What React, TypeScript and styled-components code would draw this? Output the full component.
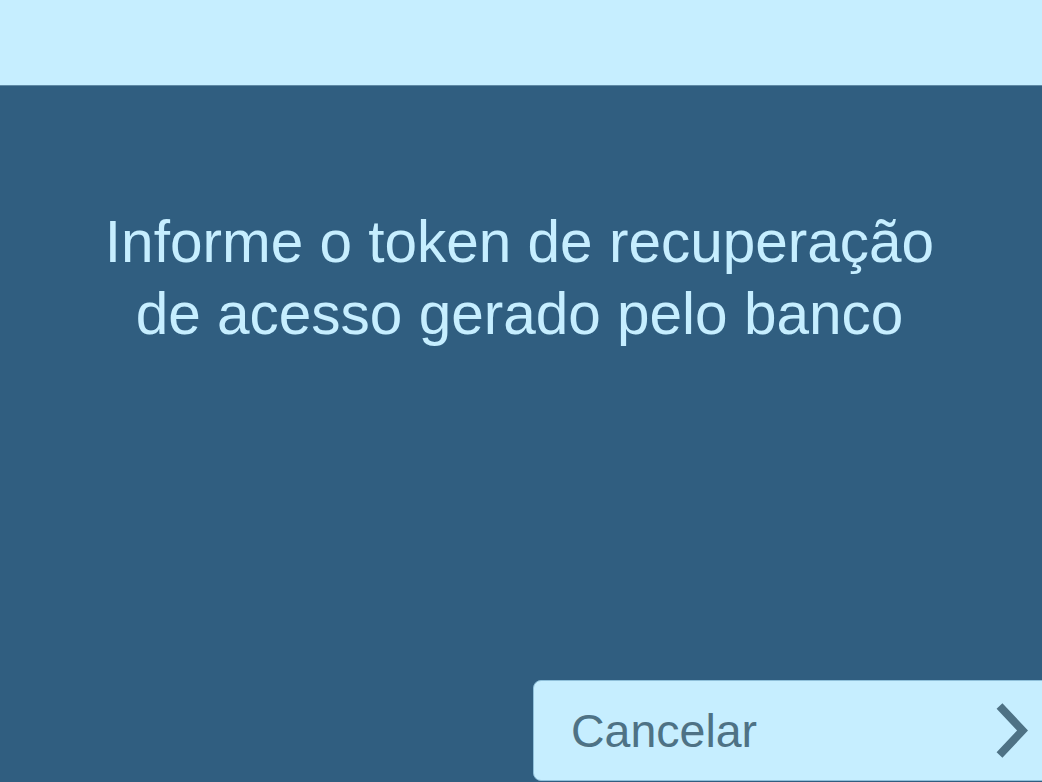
import React from "react";
import styled, { createGlobalStyle } from "styled-components";

const GlobalStyle = createGlobalStyle`
  html, body { margin: 0; padding: 0; }
  body { font-family: "Liberation Sans", Arial, sans-serif; background: #305e80; }
  #root { width: 1042px; height: 782px; overflow: hidden; }
`;

const Screen = styled.div`
  display: flex;
  flex-direction: column;
  width: 1042px;
  height: 782px;
  overflow: hidden;
  background: #305e80;
`;

const Header = styled.header`
  flex: 0 0 85px;
  background: #c6eeff;
  border-bottom: 1px solid #5f8aa6;
`;

const Main = styled.main`
  flex: 1;
  display: flex;
  flex-direction: column;
  padding-top: 120px;
`;

const Title = styled.h1`
  margin: 0;
  padding-right: 3px;
  font-family: "Liberation Sans", Arial, sans-serif;
  font-weight: 400;
  font-size: 58.5px;
  line-height: 72px;
  color: #c6eeff;
  text-align: center;
`;

const Footer = styled.div`
  margin-top: auto;
  display: flex;
  justify-content: flex-end;
  padding-bottom: 1px;
`;

const ActionButton = styled.button`
  display: flex;
  align-items: center;
  justify-content: space-between;
  box-sizing: border-box;
  width: 517px;
  height: 101px;
  margin-right: -8px;
  padding: 0 20px 0 37px;
  background: #c6eeff;
  border: 1px solid #8fc0da;
  border-radius: 8px;
  font-family: "Liberation Sans", Arial, sans-serif;
  font-size: 46.5px;
  color: #4e7285;
  cursor: pointer;
`;

const Chevron = () => (
  <svg width="34" height="56" viewBox="0 0 34 56" aria-hidden="true">
    <path
      d="M4.5 3 L27.5 27.5 L4.5 52"
      fill="none"
      stroke="#4e7285"
      strokeWidth="8"
      strokeLinecap="butt"
      strokeLinejoin="miter"
    />
  </svg>
);

export default function App() {
  return (
    <>
      <GlobalStyle />
      <Screen>
        <Header />
        <Main>
          <Title>
            Informe o token de recuperação
            <br />
            de acesso gerado pelo banco
          </Title>
          <Footer>
            <ActionButton>
              <span>Cancelar</span>
              <Chevron />
            </ActionButton>
          </Footer>
        </Main>
      </Screen>
    </>
  );
}
